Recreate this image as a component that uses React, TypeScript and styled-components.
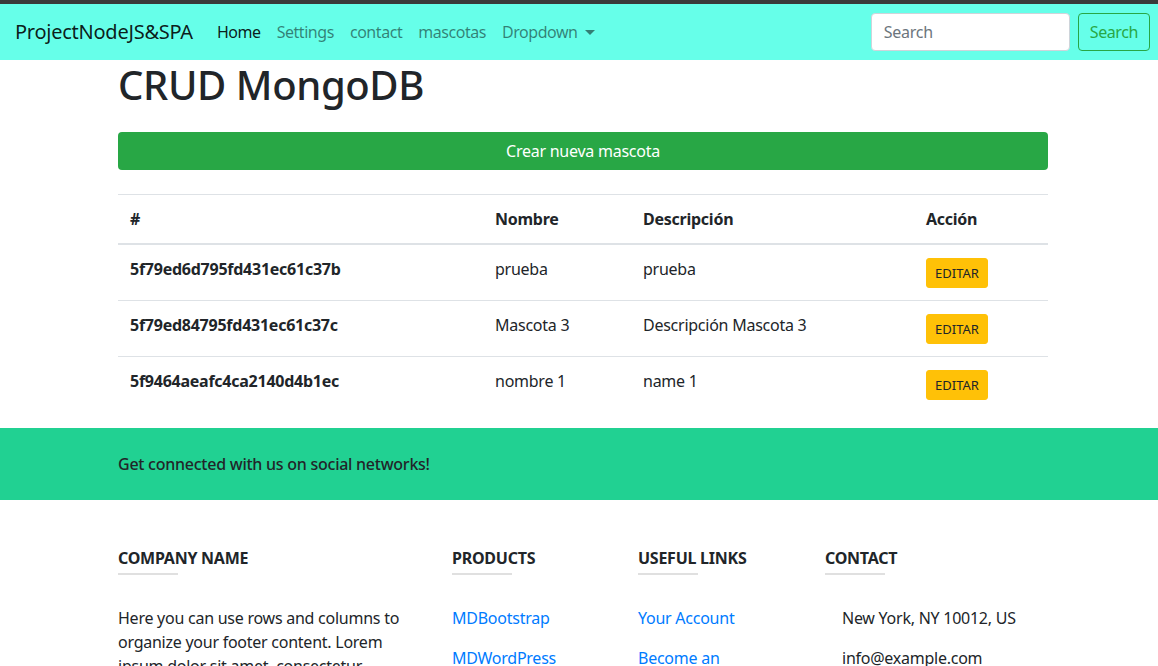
import React from "react";
import styled, { createGlobalStyle } from "styled-components";

const Global = createGlobalStyle`
  * { box-sizing: border-box; }
  html, body { margin: 0; padding: 0; background: #fff; }
  body {
    font-family: "Noto Sans", "Open Sans", sans-serif;
    font-size: 16px;
    line-height: 24px;
    letter-spacing: -0.25px;
    color: #212529;
    border-top: 4px solid #3a3a3a;
  }
`;

const Navbar = styled.nav`
  height: 56px;
  background: #66ffe9;
  display: flex;
  align-items: center;
  padding: 0 8px 0 15px;
`;

const Brand = styled.a`
  font-size: 20px;
  line-height: 30px;
  color: rgba(0, 0, 0, 0.9);
  margin-right: 16px;
  text-decoration: none;
`;

const NavList = styled.div`
  display: flex;
  align-items: center;
  flex: 1;
`;

const NavLink = styled.a<{ $active?: boolean }>`
  padding: 8px;
  letter-spacing: -0.45px;
  color: ${(p) => (p.$active ? "rgba(0,0,0,0.9)" : "rgba(0,0,0,0.5)")};
  text-decoration: none;
  display: flex;
  align-items: center;
`;

const Caret = styled.span`
  display: inline-block;
  margin-left: 7px;
  border-top: 5px solid currentColor;
  border-left: 5px solid transparent;
  border-right: 5px solid transparent;
  margin-top: 1px;
`;

const SearchForm = styled.form`
  display: flex;
  align-items: center;
  gap: 8px;
`;

const SearchInput = styled.input`
  width: 199px;
  height: 38px;
  border: 1px solid #ced4da;
  border-radius: 4px;
  padding: 6px 12px;
  font: inherit;
  letter-spacing: inherit;
  color: #495057;
  &::placeholder { color: #6c757d; }
`;

const OutlineButton = styled.button`
  height: 38px;
  padding: 6px 11px;
  border: 1px solid #28a745;
  color: #28a745;
  background: transparent;
  border-radius: 4px;
  font: inherit;
  letter-spacing: -0.4px;
`;

const Container = styled.main`
  padding: 0 110px 0 118px;
`;

const Title = styled.h1`
  font-size: 40px;
  font-weight: 500;
  line-height: 48px;
  letter-spacing: -0.4px;
  margin: 1px 0 0;
`;

const CreateButton = styled.button`
  display: block;
  width: 100%;
  height: 38px;
  margin-top: 23px;
  border: none;
  border-radius: 4px;
  background: #28a745;
  color: #fff;
  font: inherit;
  letter-spacing: inherit;
`;

const Table = styled.table`
  width: 100%;
  border-collapse: collapse;
  margin-top: 24px;
  margin-bottom: 16px;
`;

const Th = styled.th<{ $w?: number }>`
  text-align: left;
  font-weight: 700;
  padding: 12px;
  border-top: 1px solid #dee2e6;
  border-bottom: 2px solid #dee2e6;
  vertical-align: bottom;
  width: ${(p) => (p.$w ? `${p.$w}px` : "auto")};
`;

const Td = styled.td<{ $bold?: boolean }>`
  padding: 12px;
  border-top: 1px solid #dee2e6;
  vertical-align: top;
  font-weight: ${(p) => (p.$bold ? 700 : 400)};
`;

const EditButton = styled.button`
  display: block;
  height: 30px;
  background: #ffc107;
  border: 1px solid #ffc107;
  color: #212529;
  border-radius: 3px;
  padding: 0 8px;
  font: inherit;
  font-size: 13px;
  letter-spacing: 0;
  line-height: 28px;
  margin-top: 1px;
`;

const SocialBand = styled.section`
  background: #21d192;
  padding: 24px 118px;
  font-weight: 500;
`;

const FooterGrid = styled.footer`
  display: grid;
  grid-template-columns: 334px 186px 187px 1fr;
  padding: 46px 0 0 118px;
`;

const Col = styled.div<{ $w: number }>`
  max-width: ${(p) => p.$w}px;
`;

const ColTitle = styled.h6`
  font-size: 16px;
  font-weight: 700;
  text-transform: uppercase;
  margin: 0;
  line-height: 24px;
  white-space: nowrap;
`;

const Rule = styled.hr`
  width: 60px;
  height: 2px;
  border: none;
  background: #e0e0e0;
  margin: 3px 0 31px;
`;

const Para = styled.p<{ $indent?: boolean }>`
  margin: 0 0 16px;
  padding-left: ${(p) => (p.$indent ? "17px" : "0")};
`;

const Link = styled.a`
  color: #007bff;
  text-decoration: none;
`;

const rows = [
  ["5f79ed6d795fd431ec61c37b", "prueba", "prueba"],
  ["5f79ed84795fd431ec61c37c", "Mascota 3", "Descripción Mascota 3"],
  ["5f9464aeafc4ca2140d4b1ec", "nombre 1", "name 1"],
];

export default function App() {
  return (
    <>
      <Global />
      <Navbar>
        <Brand href="#">ProjectNodeJS&amp;SPA</Brand>
        <NavList>
          <NavLink $active href="#">Home</NavLink>
          <NavLink href="#">Settings</NavLink>
          <NavLink href="#">contact</NavLink>
          <NavLink href="#">mascotas</NavLink>
          <NavLink href="#">
            Dropdown
            <Caret />
          </NavLink>
        </NavList>
        <SearchForm onSubmit={(e) => e.preventDefault()}>
          <SearchInput placeholder="Search" />
          <OutlineButton type="submit">Search</OutlineButton>
        </SearchForm>
      </Navbar>
      <Container>
        <Title>CRUD MongoDB</Title>
        <CreateButton>Crear nueva mascota</CreateButton>
        <Table>
          <thead>
            <tr>
              <Th $w={365}>#</Th>
              <Th $w={148}>Nombre</Th>
              <Th $w={283}>Descripción</Th>
              <Th>Acción</Th>
            </tr>
          </thead>
          <tbody>
            {rows.map((r) => (
              <tr key={r[0]}>
                <Td $bold>{r[0]}</Td>
                <Td>{r[1]}</Td>
                <Td>{r[2]}</Td>
                <Td>
                  <EditButton>EDITAR</EditButton>
                </Td>
              </tr>
            ))}
          </tbody>
        </Table>
      </Container>
      <SocialBand>Get connected with us on social networks!</SocialBand>
      <FooterGrid>
        <Col $w={292}>
          <ColTitle>Company name</ColTitle>
          <Rule />
          <Para>
            Here you can use rows and columns to organize your footer content. Lorem ipsum dolor sit amet, consectetur
            adipisicing elit.
          </Para>
        </Col>
        <Col $w={130}>
          <ColTitle>Products</ColTitle>
          <Rule />
          <Para><Link href="#">MDBootstrap</Link></Para>
          <Para><Link href="#">MDWordPress</Link></Para>
          <Para><Link href="#">BrandFlow</Link></Para>
          <Para><Link href="#">Bootstrap Angular</Link></Para>
        </Col>
        <Col $w={130}>
          <ColTitle>Useful links</ColTitle>
          <Rule />
          <Para><Link href="#">Your Account</Link></Para>
          <Para><Link href="#">Become an Affiliate</Link></Para>
          <Para><Link href="#">Shipping Rates</Link></Para>
          <Para><Link href="#">Help</Link></Para>
        </Col>
        <Col $w={300}>
          <ColTitle>Contact</ColTitle>
          <Rule />
          <Para $indent>New York, NY 10012, US</Para>
          <Para $indent>info@example.com</Para>
          <Para $indent>+ 01 234 567 88</Para>
          <Para $indent>+ 01 234 567 89</Para>
        </Col>
      </FooterGrid>
    </>
  );
}
